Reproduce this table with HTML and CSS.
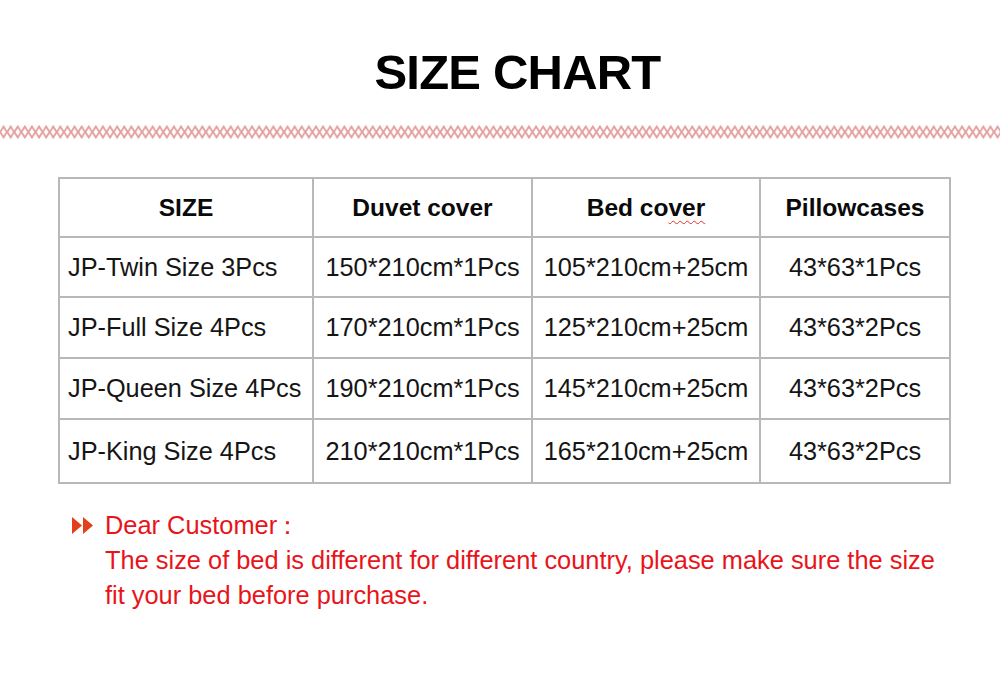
FILE: index.html
```html
<!DOCTYPE html>
<html>
<head>
<meta charset="utf-8">
<link rel="stylesheet" href="styles.css">
</head>
<body>
<div class="page">
  <h1 class="title">SIZE CHART</h1>
  <svg class="divider" width="1000" height="18" viewBox="0 0 1000 18">
    <defs>
      <pattern id="chain" x="0" y="0" width="7.1" height="18" patternUnits="userSpaceOnUse">
        <path d="M3.55 3.5 L6.9 9 L3.55 14.5 L0.2 9 Z" fill="none" stroke="#e59f9f" stroke-width="1.8"/>
      </pattern>
    </defs>
    <rect x="0" y="0" width="1000" height="18" fill="url(#chain)"/>
  </svg>
  <table class="chart">
    <colgroup>
      <col class="c1"><col class="c2"><col class="c3"><col class="c4">
    </colgroup>
    <thead>
      <tr class="head">
        <th>SIZE</th>
        <th>Duvet cover</th>
        <th>Bed co<span class="squiggle">ver</span></th>
        <th>Pillowcases</th>
      </tr>
    </thead>
    <tbody>
      <tr class="r1"><td class="first">JP-Twin Size 3Pcs</td><td>150*210cm*1Pcs</td><td>105*210cm+25cm</td><td>43*63*1Pcs</td></tr>
      <tr class="r2"><td class="first">JP-Full Size 4Pcs</td><td>170*210cm*1Pcs</td><td>125*210cm+25cm</td><td>43*63*2Pcs</td></tr>
      <tr class="r3"><td class="first">JP-Queen Size 4Pcs</td><td>190*210cm*1Pcs</td><td>145*210cm+25cm</td><td>43*63*2Pcs</td></tr>
      <tr class="r4"><td class="first">JP-King Size 4Pcs</td><td>210*210cm*1Pcs</td><td>165*210cm+25cm</td><td>43*63*2Pcs</td></tr>
    </tbody>
  </table>
  <div class="note">
    <svg class="arrow" width="22" height="17" viewBox="0 0 22 17">
      <path d="M0 0 L10 8.5 L0 17 Z M11 0 L21 8.5 L11 17 Z" fill="#e2401a"/>
    </svg>
    <div class="note-text">
      <p>Dear Customer<span class="colon">：</span></p>
      <p>The size of bed is different for different country, please make sure the size</p>
      <p>fit your bed before purchase.</p>
    </div>
  </div>
</div>
</body>
</html>
```

FILE: styles.css
```css
html, body {
  margin: 0;
  padding: 0;
  background: #ffffff;
}
.page {
  width: 1000px;
  height: 678px;
  font-family: "Liberation Sans", Arial, sans-serif;
  color: #111;
  overflow: hidden;
}
.title {
  margin: 0;
  padding-top: 42px;
  padding-left: 35px;
  height: 60px;
  line-height: 60px;
  font-size: 49px;
  letter-spacing: -0.8px;
  font-weight: bold;
  text-align: center;
  color: #000;
}
.divider {
  display: block;
  margin-top: 21px;
}
.chart {
  margin-top: 36px;
  margin-left: 58px;
  border-collapse: collapse;
  width: 891px;
  table-layout: fixed;
  font-size: 25.3px;
}
.c1 { width: 254px; }
.c2 { width: 219px; }
.c3 { width: 228px; }
.c4 { width: 190px; }
.chart th, .chart td {
  border: 2px solid #b8b8b8;
  padding: 0;
  text-align: center;
  vertical-align: middle;
  white-space: nowrap;
  color: #151515;
}
.chart th {
  font-weight: bold;
  font-size: 24.5px;
  color: #0a0a0a;
}
.chart td.first {
  text-align: left;
  padding-left: 8px;
}
.head { height: 59px; }
.r1 { height: 60px; }
.r2 { height: 61px; }
.r3 { height: 61px; }
.r4 { height: 64px; }
.squiggle {
  text-decoration: underline wavy #e03030;
  text-decoration-thickness: 1px;
  text-underline-offset: 4px;
}
.note {
  display: flex;
  align-items: flex-start;
  margin-top: 24px;
  margin-left: 72px;
}
.arrow {
  display: block;
  margin-top: 9px;
  margin-right: 11px;
  flex: none;
}
.note-text p {
  margin: 0;
  line-height: 35px;
  font-size: 25.4px;
  color: #e8141a;
}
.colon {
  margin-left: -2px;
}
```
